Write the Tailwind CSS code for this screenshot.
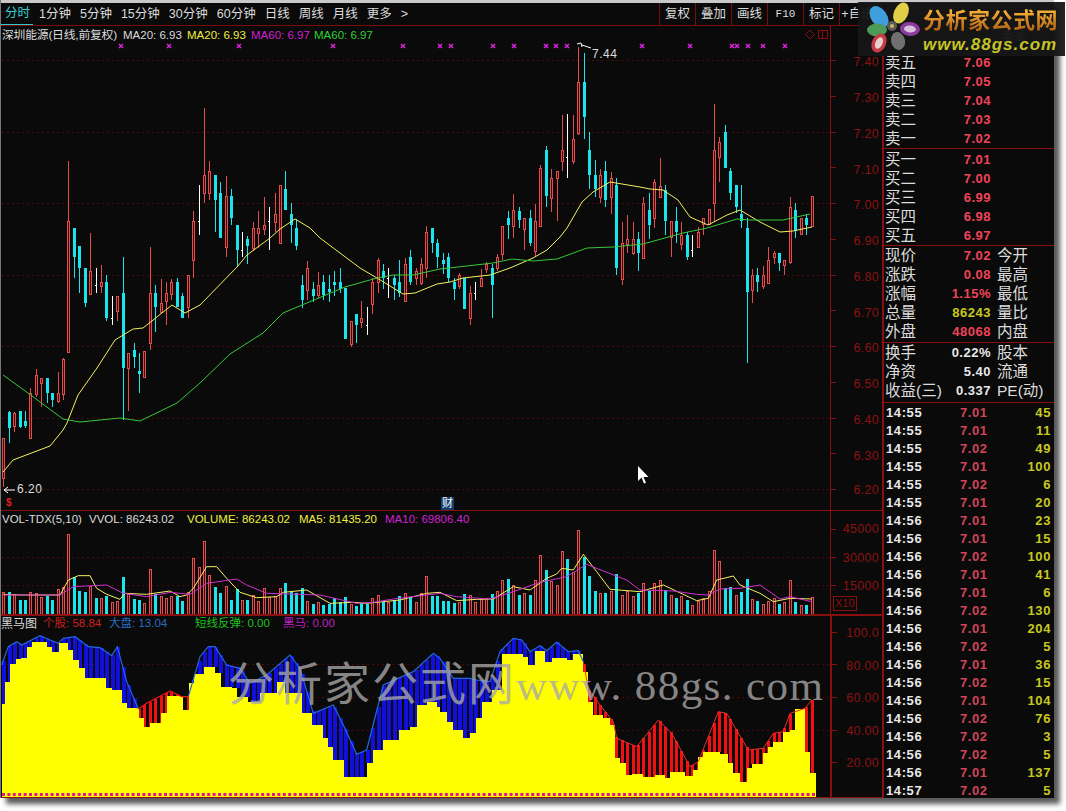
<!DOCTYPE html>
<html lang="zh">
<head>
<meta charset="UTF-8">
<title>分析家公式网</title>
<script src="https://cdn.jsdelivr.net/npm/@tailwindcss/browser@4"></script>
</head>
<body class="h-[811px] w-[1066px] overflow-hidden bg-white text-[12px] leading-none text-[#dcdcdc] font-['Liberation_Sans','Noto_Sans_CJK_SC',sans-serif]">
<div class="relative flex h-[798px] w-[1054px] flex-col border-l border-[#777] bg-[#0a0a0a] shadow-[6px_6px_5px_rgba(0,0,0,0.65)]">
  <div class="h-[3px] bg-[#c9c9c9]"></div>
  <!-- toolbar -->
  <div class="flex h-[23px] items-center border-b border-[#7a0c0c] text-[12.5px]">
    <div class="flex h-full items-center border-b border-[#35c4c4] pl-[4px] pr-[3px] text-[#35d0d0]">分时</div>
    <div class="ml-[6px] flex gap-[9px]">
      <span>1分钟</span><span>5分钟</span><span>15分钟</span><span>30分钟</span><span>60分钟</span><span>日线</span><span>周线</span><span>月线</span><span>更多</span><span>&gt;</span>
    </div>
    <div class="ml-auto mr-[179px] flex h-full">
      <span class="flex w-[36px] items-center justify-center border-l border-[#7a0c0c]">复权</span>
      <span class="flex w-[36px] items-center justify-center border-l border-[#7a0c0c]">叠加</span>
      <span class="flex w-[36px] items-center justify-center border-l border-[#7a0c0c]">画线</span>
      <span class="flex w-[36px] items-center justify-center border-l border-[#7a0c0c] font-['Liberation_Mono'] text-[11px]">F10</span>
      <span class="flex w-[36px] items-center justify-center border-l border-[#7a0c0c]">标记</span>
      <span class="flex w-[36px] items-center justify-center border-l border-[#7a0c0c]">+自选</span>
    </div>
  </div>

  <div class="flex min-h-0 flex-1">
    <!-- charts -->
    <div class="flex w-[881px] flex-col">
      <div class="relative flex h-[485px] border-b border-[#8a1010]">
        <div class="relative w-[829px]">
          <svg id="main" width="829" height="484" viewBox="1 26 829 484" class="block" shape-rendering="crispEdges"></svg>
          <div class="absolute left-[1px] top-[3px] flex h-[13px] items-center whitespace-nowrap text-[11.5px]">
            <span class="w-[121px] text-[11.8px] tracking-[-0.2px]">深圳能源(日线,前复权)</span>
            <span class="w-[64px]">MA20: 6.93</span>
            <span class="w-[64px] text-[#f0f040]">MA20: 6.93</span>
            <span class="w-[63px] text-[#d020d0]">MA60: 6.97</span>
            <span class="text-[#30d030]">MA60: 6.97</span>
          </div>
          <svg class="absolute left-[804px] top-[3px]" width="24" height="11" fill="none" stroke="#8a1010"><path d="M5 1l4.500 4.500L5 10 .5 5.500z"/><path d="M13.500 1.500h9v8h-9zM17.500 1.500v8"/></svg>
          <span class="absolute left-[591px] top-[22px] text-[12px] tracking-[0.5px]">7.44</span>
          <span class="absolute left-[16px] top-[457px] text-[12px] tracking-[0.5px]">6.20</span>
          <span class="absolute left-[5px] top-[472px] text-[10px] font-bold text-[#e02020]">$</span>
          <span class="absolute left-[440px] top-[471px] bg-[#123e6e] px-[1px] py-[1px] text-[11px] text-white">财</span>
          <svg class="absolute left-[636px] top-[439px]" width="13" height="20"><path d="M1 1v15l3.500-3.500 2.500 6 2-.8-2.500-5.700h5z" fill="#fff"/></svg>
        </div>
        <svg id="axis1" width="52" height="484" viewBox="831 26 51 484" class="border-l border-[#8a1010]"></svg>
      </div>

      <div class="relative flex h-[105px] border-b-2 border-[#8a1010]">
        <div class="relative w-[829px]">
          <svg id="vol" width="829" height="103" viewBox="1 511 829 103" class="block" shape-rendering="crispEdges"></svg>
          <div class="absolute left-[1px] top-[2px] flex h-[13px] items-center whitespace-nowrap text-[11.500px]">
            <span class="w-[87px]">VOL-TDX(5,10)</span>
            <span class="w-[98px]">VVOL: 86243.02</span>
            <span class="w-[112px] text-[#f0f040]">VOLUME: 86243.02</span>
            <span class="w-[86px] text-[#f0f040]">MA5: 81435.20</span>
            <span class="text-[#d020d0]">MA10: 69806.40</span>
          </div>
        </div>
        <div class="relative w-[52px] border-l border-[#8a1010]">
          <svg id="axis2" width="51" height="103" viewBox="831 511 51 103" class="block"></svg>
          <span class="absolute left-[2px] top-[85px] border border-[#8a1010] px-[1px] py-[1px] text-[11px] text-[#8a1010]">X10</span>
        </div>
      </div>

      <div class="relative flex min-h-0 flex-1 border-b border-[#8a1010]">
        <div class="relative w-[829px]">
          <svg id="low" width="829" height="181" viewBox="1 616 829 181" class="block"></svg>
          <div class="absolute left-[0px] top-[1px] flex h-[14px] items-center whitespace-nowrap text-[11.500px]">
            <span class="w-[42px] text-[12px]">黑马图</span>
            <span class="w-[66px] text-[#d02020]">个股: 58.84</span>
            <span class="w-[86px] text-[#2a6ac0]">大盘: 13.04</span>
            <span class="w-[88px] text-[#20c020]">短线反弹: 0.00</span>
            <span class="text-[#c020c0]">黑马: 0.00</span>
          </div>
          <div class="absolute left-[227px] top-[44px] flex h-[50px] items-center whitespace-nowrap text-[43px] font-['Liberation_Serif','Noto_Sans_CJK_SC',serif] text-[#a8a8a8]/80">
            <span class="w-[288px] text-[46px] tracking-[2px]">分析家公式网</span><span class="tracking-[1.400px]">www. 88gs. com</span>
          </div>
        </div>
        <svg id="axis3" width="52" height="181" viewBox="832 616 50 181" class="border-l-2 border-[#8a1010]"></svg>
      </div>
    </div>

    <!-- quote panel -->
    <div class="flex min-w-0 flex-1 flex-col border-l-2 border-[#8a1010] text-[15.500px]">
      <div class="h-[27px]">
        <div class="flex h-[22px] items-center justify-end pr-[28px] text-[12px] text-[#bbb]">委差</div>
      </div>
      <div id="sell" class="border-b border-[#8a1010]"></div>
      <div id="buy" class="border-b border-[#8a1010] pt-[1px]"></div>
      <div id="quote" class="border-b border-[#8a1010] pb-[1px]"></div>
      <div id="info" class="border-b border-[#8a1010] pb-[2px]"></div>
      <div id="ticks" class="min-h-0 flex-1 overflow-hidden"></div>
    </div>
  </div>

  <!-- logo -->
  <div class="absolute left-[857px] top-[2px] flex h-[54px] w-[207px] bg-[#161616]/95">
    <svg width="64" height="54" viewBox="0 0 64 54">
      <g transform="translate(34 24)">
        <ellipse cx="-13" cy="-9" rx="8" ry="12" transform="rotate(-35 -13 -9)" fill="#3f9fdc"/>
        <ellipse cx="9" cy="-13" rx="7" ry="11" transform="rotate(25 9 -13)" fill="#e2cf48"/>
        <ellipse cx="18" cy="3" rx="10" ry="7" transform="rotate(5 18 3)" fill="#8a3c9c"/>
        <ellipse cx="18" cy="3" rx="6" ry="3.500" transform="rotate(5 18 3)" fill="#d8c0dc"/>
        <ellipse cx="-15" cy="4" rx="10" ry="6.500" fill="#4e9a58"/>
        <ellipse cx="-13" cy="17" rx="7" ry="10" transform="rotate(25 -13 17)" fill="#c83c48"/>
        <ellipse cx="-13" cy="17" rx="3.500" ry="6" transform="rotate(25 -13 17)" fill="#e8d0d0"/>
        <ellipse cx="6" cy="15" rx="7" ry="9" transform="rotate(-15 6 15)" fill="#707070"/>
        <circle r="5" fill="#5a5a5a"/><circle r="2" fill="#c8b858"/>
      </g>
    </svg>
    <div class="flex flex-col pl-[1px] pt-[7px]">
      <span class="bg-linear-to-b from-[#ffb838] to-[#a85a10] bg-clip-text text-[22px] font-bold leading-[24px] tracking-[0.500px] text-transparent">分析家公式网</span>
      <span class="mt-[3px] text-[17px] font-bold italic tracking-[1px] text-[#c4c428]">www.88gs.com</span>
    </div>
  </div>
</div>

<script>
// x position of bar i
const X = i => 3.3 + 5.425 * i;

// [type, high, body top, body bottom, low]  0 red, 1 cyan, 2 white doji
const candles = [
[0,438,438,478,487],[1,411,412,428,443],[0,412,413,426,432],[1,411,411,427,428],[1,411,421,426,428],[0,388,393,438,439],[0,369,375,394,397],[0,378,378,383,407],[1,378,378,393,403],[1,393,393,400,407],
[0,372,393,401,403],[0,358,359,394,400],[0,161,221,352,353],[1,228,228,257,278],[1,246,246,268,293],[1,268,268,303,307],[0,233,271,294,295],[2,268,285,285,293],[0,265,282,286,293],[1,275,282,318,321],
[2,296,318,318,325],[0,296,296,311,321],[1,257,293,368,420],[0,353,353,368,411],[1,343,350,357,368],[1,353,371,374,393],[0,351,351,377,378],[0,247,293,343,350],[1,285,293,307,332],[0,279,303,312,313],
[0,282,293,301,325],[0,279,282,294,300],[1,278,282,307,307],[1,293,296,318,318],[0,275,275,307,318],[0,211,221,260,278],[2,185,221,221,235],[0,108,175,193,203],[0,161,171,193,200],[1,175,175,200,232],
[1,182,193,238,238],[0,176,196,247,257],[1,189,196,218,225],[1,225,225,250,267],[2,232,250,250,257],[1,236,239,246,264],[0,222,228,248,251],[0,211,228,233,248],[0,197,225,229,235],[2,207,221,221,250],
[0,193,214,222,232],[0,185,185,243,243],[1,171,189,210,210],[1,203,214,225,243],[1,219,228,246,250],[1,275,285,300,308],[0,261,268,290,300],[1,282,289,296,302],[0,272,285,295,298],[1,275,282,295,300],
[1,275,289,292,302],[1,271,282,285,296],[1,268,282,289,293],[1,288,288,339,339],[0,321,321,344,347],[1,314,314,325,343],[0,301,318,322,328],[2,307,325,325,335],[0,278,282,304,314],[0,258,260,282,293],
[1,264,271,278,289],[2,268,278,278,298],[1,275,278,285,300],[1,260,282,293,297],[0,258,264,301,301],[1,250,257,282,285],[0,268,271,278,285],[0,258,264,283,285],[0,226,232,268,278],[1,228,228,243,253],
[1,239,243,257,268],[1,253,260,264,274],[1,253,257,278,282],[1,278,282,289,300],[0,273,275,286,289],[1,278,278,309,309],[0,286,293,318,325],[2,282,293,293,300],[0,269,278,286,286],[0,262,264,269,273],
[1,264,268,285,318],[0,254,257,268,271],[0,226,226,254,260],[1,211,218,225,239],[0,194,210,226,238],[1,207,211,220,228],[0,218,218,229,250],[1,210,218,243,246],[0,204,221,251,257],[0,165,168,226,226],
[1,146,150,196,207],[0,169,178,198,212],[0,171,171,178,221],[0,115,150,161,171],[2,114,157,157,178],[0,115,139,161,164],[0,47,82,133,135],[1,53,82,117,139],[1,132,150,175,189],[1,160,175,189,197],
[0,169,175,197,203],[1,161,171,200,207],[0,172,178,197,214],[1,178,185,268,275],[0,222,243,279,285],[0,215,239,244,253],[0,222,239,253,255],[1,232,239,253,271],[0,197,203,258,258],[1,193,210,225,239],
[0,179,182,218,228],[0,158,186,197,197],[1,185,190,221,235],[0,221,221,237,257],[1,207,221,232,243],[0,222,235,244,250],[1,232,235,257,260],[2,235,250,250,257],[0,227,232,247,247],[0,218,218,224,235],
[0,209,209,224,224],[0,104,150,203,222],[0,137,142,157,182],[1,125,132,168,168],[1,168,171,193,200],[1,185,185,207,213],[1,185,214,221,228],[1,218,228,292,363],[0,269,275,290,303],[1,268,275,282,292],
[0,266,275,286,289],[0,247,260,283,283],[0,251,253,257,264],[1,253,253,263,271],[0,260,260,265,275],[0,197,207,262,264],[1,203,210,231,238],[0,218,218,234,234],[1,214,218,225,235],[0,196,196,226,226]];

// hollow red bar: solid 3px column with a dim 1px core
const hollow = (x, top, bot, col) => `<rect x="${x - 1}" y="${top}" width="3" height="${bot - top + 1}" fill="${col}"/><rect x="${x}" y="${top + 1}" width="1" height="${Math.max(0, bot - top - 1)}" fill="#3c0c0c"/>`;

const draw = [];
for (const v of [60,132,203,275,346,418,489]) draw.push(`<path d="M2 ${v}.5H830" stroke="#4a0a0a" stroke-dasharray="2 3"/>`);
candles.forEach((c, i) => {
  const x = Math.round(X(i)), [t, hi, top, bot, lo] = c;
  if (t == 2) {
    draw.push(`<rect x="${x}" y="${hi}" width="1" height="${lo - hi}" fill="#fff"/><rect x="${x - 1}" y="${top}" width="1" height="1" fill="#fff"/>`);
    return;
  }
  const col = t ? '#1ce4ec' : '#e44c4c';
  draw.push(`<rect x="${x}" y="${hi}" width="1" height="${lo - hi}" fill="${col}"/>`);
  if (t) draw.push(`<rect x="${x - 1}" y="${top}" width="3" height="${bot - top}" fill="${col}"/>`);
  else draw.push(hollow(x, top, bot, col));
});
const line = (pts, col, w = 1) => `<polyline shape-rendering="auto" fill="none" stroke="${col}" stroke-width="${w}" points="${pts.map(p => p.join(',')).join(' ')}"/>`;
draw.push(line([[3,472],[13,460],[50,446],[63,430],[67,423],[78,395],[97,368],[115,340],[133,329],[143,328],[172,305],[185,313],[200,305],[237,267],[247,255],[270,238],[280,229],[295,219],[310,228],[320,238],[360,268],[377,278],[403,294],[415,293],[437,284],[450,282],[463,278],[490,275],[510,268],[533,258],[547,250],[560,237],[567,228],[582,202],[593,192],[610,182],[640,187],[650,189],[663,190],[678,200],[690,217],[708,225],[727,215],[740,210],[760,222],[780,232],[793,231],[812,227]], '#f4f060'));
draw.push(line([[3,375],[28,393],[63,419],[80,422],[120,418],[140,421],[177,403],[200,383],[230,354],[263,333],[283,313],[302,305],[345,287],[377,278],[393,275],[413,275],[440,269],[493,263],[512,259],[533,261],[557,259],[587,248],[613,247],[643,244],[683,233],[707,228],[737,219],[750,220],[783,220],[810,214]], '#38c838'));
// pink crosses above the candles
for (const m of [121,169,239,333,403,440,451,493,514,546,556,567,642,690,732,737,748,763,785]) draw.push(`<path shape-rendering="auto" d="M${m - 2} 44l4 4m0-4l-4 4" stroke="#e020e0" stroke-width="1.500" fill="none"/>`);
draw.push(`<path d="M577 44l4-1 1 4M582 45l9 3" stroke="#fff" fill="none" shape-rendering="auto"/>`);
draw.push(`<path d="M4 490h11M4 490l4-3M4 490l4 3" stroke="#fff" fill="none" shape-rendering="auto"/>`);
document.getElementById('main').innerHTML = draw.join('');

// axis labels
function axis(id, labels, x0) {
  document.getElementById(id).innerHTML = labels.map(([t, y, tick]) =>
    `<path d="M${x0} ${tick}.5h5" stroke="#8a1010"/><text x="879" y="${y + 4.500}" text-anchor="end" font-size="12.500" letter-spacing="0.300" fill="#8a1212">${t}</text>`).join('');
}
axis('axis1', [['7.40',61,60],['7.30',97,96],['7.20',133,132],['7.10',169,167],['7.00',204,203],['6.90',240,239],['6.80',276,275],['6.70',312,310],['6.60',347,346],['6.50',383,382],['6.40',419,418],['6.30',455,453],['6.20',489,489]], 831);
axis('axis2', [['45000',528,529],['30000',557,557],['15000',585,585]], 831);
axis('axis3', [['100.0',632,632],['80.00',665,664],['60.00',697,697],['40.00',730,730],['20.00',762,762]], 832);

// volume bars, top in zoomed units, negative = cyan
const vols = [262,-262,267,-285,-285,262,265,275,-272,-285,252,247,88,-217,-258,-260,243,-278,278,-272,290,287,-217,268,-282,-285,293,193,-268,272,278,272,-272,-287,262,160,187,107,210,-247,-265,243,-285,-253,285,-285,270,288,250,275,272,250,-235,-258,-265,-250,287,-297,292,-300,-297,-280,-292,-277,297,-303,-295,-297,280,270,-290,290,-285,-273,265,-275,290,265,213,-272,-272,-288,-288,-293,290,-267,270,290,278,280,-267,258,225,-222,240,-270,265,-270,225,150,-195,228,240,138,-162,200,75,-155,-212,-258,265,-263,258,-208,270,258,273,-263,235,-258,235,225,-255,270,-278,272,-285,300,288,278,258,135,168,-250,-247,270,-262,-222,283,-288,298,288,280,-297,290,225,-290,300,-300,277];
const zy = z => 505 + z / 3;
const vd = [];
for (const v of [557,585]) vd.push(`<path d="M2 ${v}.5H830" stroke="#4a0a0a" stroke-dasharray="2 3"/>`);
vols.forEach((v, i) => {
  const x = Math.round(X(i)), t = Math.round(zy(Math.abs(v)));
  if (v < 0) vd.push(`<rect x="${x - 1}" y="${t}" width="3" height="${614 - t}" fill="#1ce4ec"/>`);
  else vd.push(hollow(x, t, 614, '#e05050'));
});
const zp = a => a.map(([x, y]) => [x / 3, zy(y)]);
const off = a => a.map(([x, y]) => [x + 1320, y]);
vd.push(line(zp([[10,268],[60,270],[180,270],[205,225],[235,212],[270,212],[290,250],[320,268],[360,283],[375,265],[440,268],[510,258],[540,275],[560,270],[580,250],[620,185],[650,185],[680,220],[720,262],[770,278],[830,275],[850,262],[920,255],[990,295],[1060,292],[1100,295],[1200,285],[1280,265],...off([[0,262],[50,287],[110,283],[160,282],[220,245],[270,255],[320,220],[350,207],[365,190],[400,195],[430,148],[470,200],[510,253],[600,260],[670,240],[770,287],[805,280],[830,225],[880,213],[900,240],[960,265],[1000,290],[1050,280],[1115,282]])]), '#f4f060'));
vd.push(line(zp([[10,270],[180,270],[220,245],[320,240],[370,265],[440,275],[510,262],[570,268],[620,235],[710,222],[740,240],[800,265],[960,270],[1070,295],[1120,292],[1180,282],[1320,265],...off([[50,275],[150,282],[220,260],[300,232],[380,215],[440,178],[490,198],[560,225],[600,255],[700,258],[770,268],[805,270],[840,252],[900,250],[960,240],[1020,282],[1050,275],[1115,290]])]), '#d030d0'));
document.getElementById('vol').innerHTML = vd.join('');

// black horse panel: [x end, top] steps of the yellow area, zoomed units
const steps = [[5,900],[15,597],[30,530],[48,477],[64,462],[80,460],[96,425],[140,410],[156,425],[176,440],[205,415],[220,435],[237,465],[254,490],[318,520],[335,548],[366,555],[382,595],[416,608],[432,638],[450,665],[483,655],[500,625],[548,573],[567,615],[583,535],[613,508],[645,487],[662,505],[695,545],[710,548],[745,575],[780,590],[830,565],[855,530],[905,565],[935,625],[968,660],[985,700],[1000,725],[1032,765],[1100,815],[1118,775],[1150,735],[1198,705],[1230,675],[1250,665],[1280,600],[1310,590],[1320,605],
...off([[20,620],[40,650],[70,675],[90,700],[108,685],[125,640],[155,590],[187,555],[250,447],[265,457],[285,480],[315,437],[335,470],[380,460],[400,465],[430,447],[445,500],[460,590],[490,630],[510,640],[525,660],[540,758],[558,775],[575,810],[610,808],[645,815],[675,810],[690,820],[735,800],[760,812],[775,795],[790,755],[840,740],[865,748],[880,775],[900,803],[920,832],[935,790],[970,778],[985,745],[1000,725],[1030,712],[1050,680],[1065,675],[1095,612],[1110,740],[1128,803]])];
const env = [[5,480],[25,425],[50,410],[65,420],[120,392],[150,405],[175,415],[190,400],[225,395],[265,425],[300,428],[335,452],[352,425],[380,530],[415,612],[440,595],[510,558],[545,575],[565,575],[600,455],[625,425],[645,425],[680,480],[720,490],[750,535],[800,510],[870,450],[900,490],[940,625],[1000,600],[1030,660],[1070,748],[1100,735],[1150,540],[1240,500],[1300,445],
...off([[0,460],[40,520],[90,520],[110,525],[150,530],[180,440],[220,400],[245,405],[270,440],[300,422],[320,437],[350,412],[385,440],[415,437],[430,470],[445,550],[480,600],[520,650],[530,700],[590,725],[655,645],[695,685],[750,785],[775,770],[835,620],[860,625],[925,735],[970,730],[1000,685],[1030,680],[1050,625],[1095,610],[1115,585]])];
const yellowAt = x => (steps.find(s => s[0] >= x) || [0, 870])[1];
const envAt = x => {
  for (let k = 1; k < env.length; k++) if (env[k][0] >= x) {
    const [a, b] = [env[k - 1], env[k]];
    return a[1] + (b[1] - a[1]) * Math.max(0, x - a[0]) / (b[0] - a[0]);
  }
  return env[env.length - 1][1];
};
const isRed = i => (i >= 25 && i <= 34) || i >= 107;
const ld = [];
for (const v of [664,697,730]) ld.push(`<path d="M2 ${v}.5H830" stroke="#4a0a0a" stroke-dasharray="2 3"/>`);
for (let i = 0; i < 150; i++) {
  const z = 3 * X(i), t = zy(envAt(z)), b = zy(yellowAt(z));
  if (b > t) ld.push(`<rect x="${Math.round(X(i)) - 1}" y="${t}" width="${isRed(i) ? 3 : 4}" height="${b - t}" fill="${isRed(i) ? '#f01010' : '#1010d8'}" shape-rendering="crispEdges"/>`);
}
let area = 'M2 797V' + zy(steps[0][1]);
steps.forEach((s, k) => { area += `H${s[0] / 3}V${zy(k + 1 < steps.length ? steps[k + 1][1] : 870)}`; });
ld.push(`<path d="${area}V797Z" fill="#ffff00" shape-rendering="crispEdges"/>`);
const part = (a, b) => env.filter(p => p[0] >= a && p[0] <= b);
ld.push(line(zp(part(0, 415)), '#2468e0', 1.2));
ld.push(line(zp(part(415, 565)), '#e81818', 1.2));
ld.push(line(zp(part(565, 1320 + 430)), '#2468e0', 1.2));
ld.push(line(zp(part(1320 + 430, 2500)), '#e83030', 1));
for (let x = 2; x < 812; x += 5.400) ld.push(`<rect x="${x}" y="793" width="3" height="3" fill="#e01890"/>`);
document.getElementById('low').innerHTML = ld.join('');

// quote panel
const row = (a, b, c, col) => `<div class="flex h-[19px] items-center"><span class="w-[36px] whitespace-nowrap pl-[1px]">${a}</span><span class="w-[71px] text-right text-[13px] font-bold tracking-[0.500px] ${col}">${b}</span><span class="pl-[6px] whitespace-nowrap">${c}</span></div>`;
const red = 'text-[#f04458]', wht = 'text-[#e8e8e8]', yel = 'text-[#c8c820]';
document.getElementById('sell').innerHTML = [['卖五','7.06'],['卖四','7.05'],['卖三','7.04'],['卖二','7.03'],['卖一','7.02']].map(r => row(r[0], r[1], '', red)).join('');
document.getElementById('buy').innerHTML = [['买一','7.01'],['买二','7.00'],['买三','6.99'],['买四','6.98'],['买五','6.97']].map(r => row(r[0], r[1], '', red)).join('');
document.getElementById('quote').innerHTML = [['现价','7.02','今开',red],['涨跌','0.08','最高',red],['涨幅','1.15%','最低',red],['总量','86243','量比',yel],['外盘','48068','内盘',red]].map(r => row(r[0], r[1], r[2], r[3])).join('');
document.getElementById('info').innerHTML = [['换手','0.22%','股本'],['净资','5.40','流通'],['收益(三)','0.337','PE(动)']].map(r => row(r[0], r[1], r[2], wht)).join('');
const ticks = [['14:55','7.01',45],['14:55','7.01',11],['14:55','7.02',49],['14:55','7.01',100],['14:55','7.02',6],['14:55','7.01',20],['14:56','7.01',23],['14:56','7.01',15],['14:56','7.02',100],['14:56','7.01',41],['14:56','7.01',6],['14:56','7.02',130],['14:56','7.01',204],['14:56','7.02',5],['14:56','7.01',36],['14:56','7.02',15],['14:56','7.01',104],['14:56','7.02',76],['14:56','7.02',3],['14:56','7.02',5],['14:56','7.01',137],['14:57','7.02',5]];
document.getElementById('ticks').innerHTML = ticks.map(t => `<div class="flex h-[18px] items-center pl-[2px] pr-[3px] text-[13px] font-bold tracking-[0.600px]"><span class="w-[74px] text-[#e8e8e8]">${t[0]}</span><span class="w-[40px] text-[#d04458]">${t[1]}</span><span class="flex-1 text-right text-[#c8c820]">${t[2]}</span></div>`).join('');
</script>
</body>
</html>
